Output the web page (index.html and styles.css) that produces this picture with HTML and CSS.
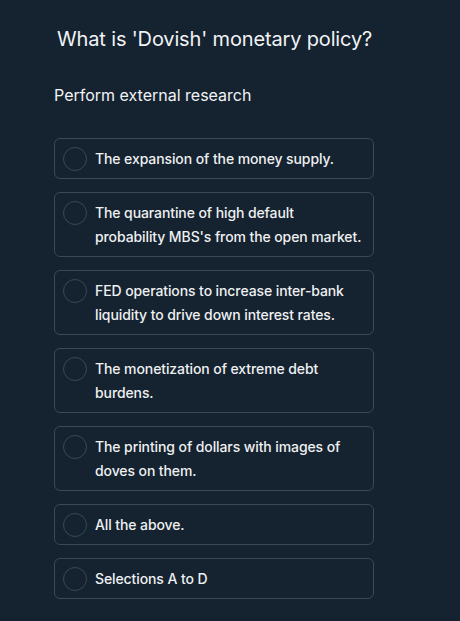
FILE: index.html
```html
<!DOCTYPE html>
<html>
<head>
<meta charset="utf-8">
<link rel="stylesheet" href="styles.css">
</head>
<body>
<div class="page">
  <h1 class="title">What is 'Dovish' monetary policy?</h1>
  <p class="subtitle">Perform external research</p>
  <ul class="options">
    <li class="option"><span class="radio"></span><span class="label">The expansion of the money supply.</span></li>
    <li class="option"><span class="radio"></span><span class="label">The quarantine of high default probability MBS's from the open market.</span></li>
    <li class="option"><span class="radio"></span><span class="label">FED operations to increase inter-bank liquidity to drive down interest rates.</span></li>
    <li class="option"><span class="radio"></span><span class="label">The monetization of extreme debt burdens.</span></li>
    <li class="option"><span class="radio"></span><span class="label">The printing of dollars with images of doves on them.</span></li>
    <li class="option"><span class="radio"></span><span class="label">All the above.</span></li>
    <li class="option"><span class="radio"></span><span class="label">Selections A to D</span></li>
  </ul>
</div>
</body>
</html>
```

FILE: styles.css
```css
html, body {
  margin: 0;
  padding: 0;
  background: #15222f;
  height: 100%;
}
.page {
  padding: 27px 86px 20px 54px;
  color: #f1f3f5;
}
.title {
  margin: 0 0 0 3px;
  font-family: Inter, "Liberation Sans", sans-serif;
  font-weight: 400;
  font-size: 20px;
  line-height: 24px;
  letter-spacing: -0.15px;
  white-space: nowrap;
}
.subtitle {
  margin: 34px 0 0 0;
  font-family: Inter, "Liberation Sans", sans-serif;
  font-size: 16px;
  line-height: 20px;
}
.options {
  list-style: none;
  margin: 33px 0 0 0;
  padding: 0;
  display: flex;
  flex-direction: column;
  gap: 13px;
}
.option {
  display: flex;
  align-items: flex-start;
  gap: 8px;
  border: 1px solid #3a4956;
  border-radius: 6px;
  padding: 8px 8px 7px 8px;
  font-family: Inter, "Noto Sans", sans-serif;
  font-weight: 500;
  font-size: 14px;
  line-height: 24px;
  letter-spacing: -0.1px;
  color: #eef0f2;
}
.radio {
  flex: none;
  width: 22px;
  height: 22px;
  border: 1px solid #3a4956;
  border-radius: 50%;
}
.label {
  flex: 1;
}
```
